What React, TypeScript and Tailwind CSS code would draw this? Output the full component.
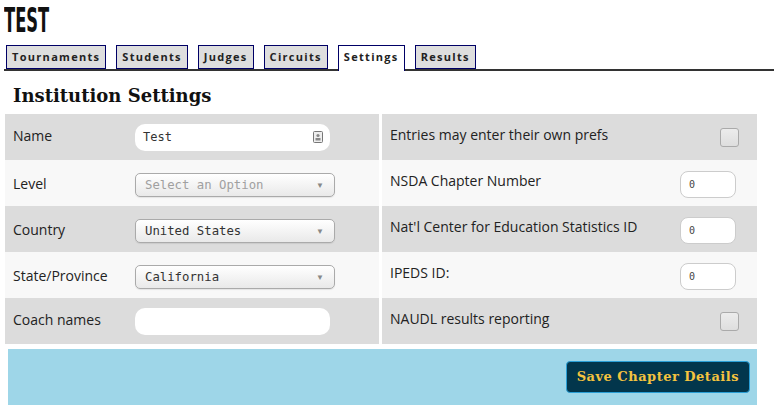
const tabs = ["Tournaments", "Students", "Judges", "Circuits", "Settings", "Results"];

function Select({ value, placeholder }: { value?: string; placeholder?: string }) {
  return (
    <div className="mt-[4px] w-[200px] h-[24px] flex items-center justify-between pl-[9px] pr-[10px] rounded-[5px] border border-[#aaa] bg-gradient-to-b from-white to-[#e9e9e9] shadow-[0_1px_1px_rgba(0,0,0,0.08)]">
      <span
        className={`font-['DejaVu_Sans_Mono',monospace] text-[12.3px] ${value ? "text-[#333]" : "text-[#a0a0a0]"}`}
      >
        {value || placeholder}
      </span>
      <span className="text-[#888] text-[8px] leading-none">▼</span>
    </div>
  );
}

function TextInput({ value, icon }: { value?: string; icon?: boolean }) {
  return (
    <div className="w-[195px] h-[27px] flex items-center justify-between pl-[8px] pr-[6px] rounded-[10px] bg-white">
      <span className="font-['DejaVu_Sans_Mono',monospace] text-[12px] text-[#333]">{value}</span>
      {icon && (
        <svg width="10" height="12" viewBox="0 0 10 12" className="mr-[1px]">
          <rect x="0.5" y="0.5" width="9" height="11" rx="1" fill="#eee" stroke="#777" />
          <circle cx="5" cy="4.5" r="1.6" fill="#888" />
          <rect x="2.5" y="7" width="5" height="2.5" fill="#888" />
        </svg>
      )}
    </div>
  );
}

function NumInput() {
  return (
    <div className="mt-[3px] w-[56px] h-[27px] flex items-center pl-[8px] rounded-[8px] border border-[#ccc] bg-white mr-[21px]">
      <span className="font-['DejaVu_Sans_Mono',monospace] text-[10px] text-[#444]">0</span>
    </div>
  );
}

function Checkbox() {
  return (
    <div className="w-[19px] h-[19px] rounded-[3px] border border-[#aaa] bg-gradient-to-b from-[#ececec] to-[#dedede] mr-[18px]" />
  );
}

export default function App() {
  const rows = [
    {
      left: "Name",
      leftCtl: <TextInput value="Test" icon />,
      sel: false,
      right: "Entries may enter their own prefs",
      rightCtl: <Checkbox />,
    },
    {
      left: "Level",
      leftCtl: <Select placeholder="Select an Option" />,
      sel: true,
      right: "NSDA Chapter Number",
      rightCtl: <NumInput />,
    },
    {
      left: "Country",
      leftCtl: <Select value="United States" />,
      sel: true,
      right: "Nat'l Center for Education Statistics ID",
      rightCtl: <NumInput />,
    },
    {
      left: "State/Province",
      leftCtl: <Select value="California" />,
      sel: true,
      right: "IPEDS ID:",
      rightCtl: <NumInput />,
    },
    {
      left: "Coach names",
      leftCtl: <TextInput />,
      sel: false,
      right: "NAUDL results reporting",
      rightCtl: <Checkbox />,
    },
  ];

  return (
    <div className="w-[774px] h-[416px] bg-white font-['Open_Sans',sans-serif] text-[#222] overflow-hidden">
      <div className="pl-[4px] pt-[4px] h-[45px]">
        <span className="inline-block origin-left scale-x-[0.55] font-['DejaVu_Sans',sans-serif] [font-stretch:condensed] font-bold text-[33px] leading-[33px] text-[#111]">
          TEST
        </span>
      </div>

      {/* Tabs */}
      <div className="ml-[4px] flex items-end gap-[10px] pl-[2px] border-b-2 border-[#333] h-[26px]">
        {tabs.map((t) => {
          const active = t === "Settings";
          return (
            <div
              key={t}
              className={`h-[24px] px-[5px] flex items-center border border-[#000066] font-bold text-[11px] tracking-[1.3px] text-[#222] ${
                active ? "bg-white border-b-0 h-[26px] -mb-[2px] pb-[2px]" : "bg-[#dedede]"
              }`}
            >
              {t}
            </div>
          );
        })}
      </div>

      <h2 className="pl-[13px] pt-[14px] pb-[7px] font-['DejaVu_Serif',serif] font-bold text-[18px] leading-[22px] text-[#111]">
        Institution Settings
      </h2>

      {/* Table */}
      <div className="ml-[5px] w-[752px] flex flex-col">
        {rows.map((r, i) => {
          const bg = i % 2 === 0 ? "bg-[#dcdcdc]" : "bg-[#f8f8f8]";
          return (
            <div key={r.left} className="flex gap-[3px] h-[46px]">
              <div className={`w-[374px] flex items-center ${bg}`}>
                <span className={`w-[130px] pl-[8px] text-[14px] ${r.sel ? "mt-[1px]" : "-mt-[4px]"}`}>
                  {r.left}
                </span>
                {r.leftCtl}
              </div>
              <div className={`flex-1 flex items-center justify-between pl-[8px] ${bg}`}>
                <span className="text-[14px] -mt-[5px]">{r.right}</span>
                {r.rightCtl}
              </div>
            </div>
          );
        })}
      </div>

      <div className="ml-[8px] mt-[5px] w-[749px] h-[56px] bg-[#9ed6e8] flex items-center justify-end pr-[7px]">
        <button className="h-[32px] px-[10px] rounded-[4px] border border-[#2a9fd6] bg-[#02364c] text-[#f4c33f] font-['DejaVu_Serif',serif] font-bold text-[13px] tracking-[0.5px]">
          Save Chapter Details
        </button>
      </div>
    </div>
  );
}
